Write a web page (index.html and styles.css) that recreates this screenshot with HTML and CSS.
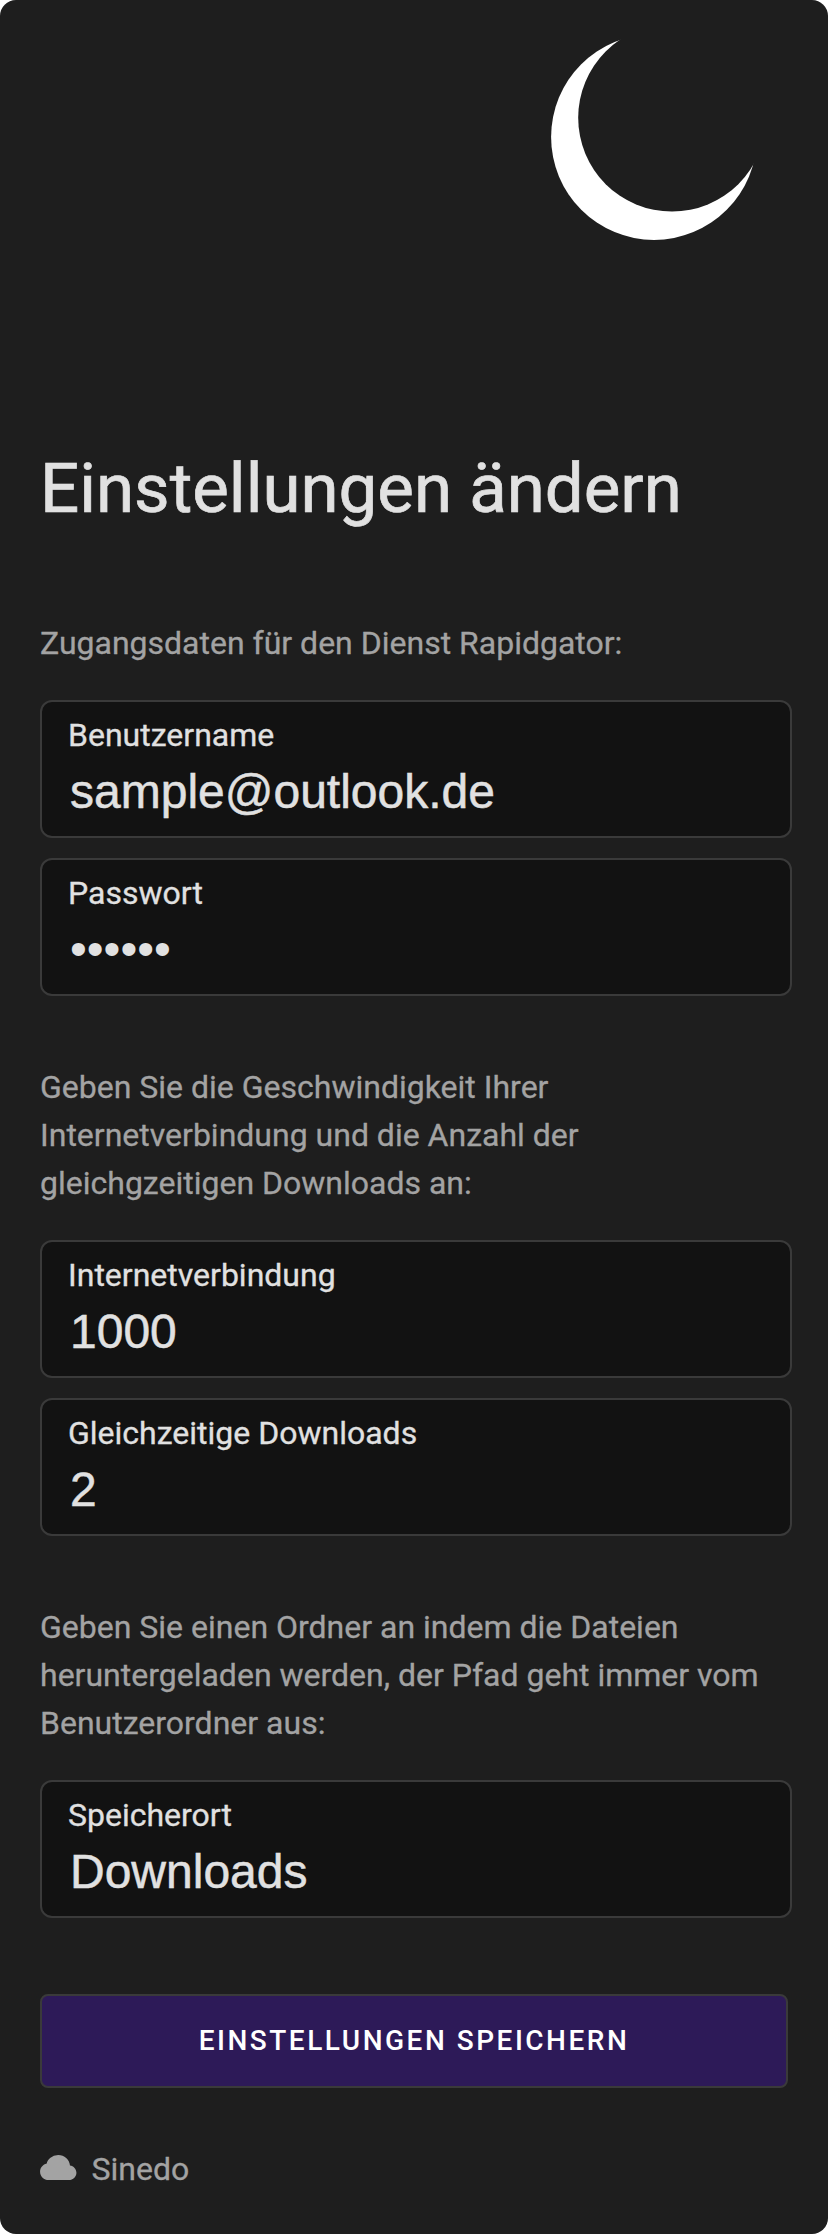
FILE: index.html
```html
<!DOCTYPE html>
<html lang="de">
<head>
<meta charset="utf-8">
<title>Einstellungen ändern</title>
<link rel="stylesheet" href="styles.css">
</head>
<body>
<main class="card">
  <header class="hero">
    <svg class="moon" viewBox="0 0 206 206" aria-hidden="true">
      <mask id="crescent">
        <rect width="206" height="206" fill="#fff"/>
        <circle cx="121" cy="83.8" r="93.8" fill="#000"/>
      </mask>
      <circle cx="103" cy="103" r="102.9" fill="#fff" mask="url(#crescent)"/>
    </svg>
  </header>
  <h1 class="title">Einstellungen ändern</h1>
  <form class="form">
    <section class="group">
      <p class="hint">Zugangsdaten für den Dienst Rapidgator:</p>
      <label class="field"><span class="label">Benutzername</span><input class="value" type="text" value="sample@outlook.de"></label>
      <label class="field"><span class="label">Passwort</span><input class="value" type="password" value="sample"></label>
    </section>
    <section class="group">
      <p class="hint">Geben Sie die Geschwindigkeit Ihrer<br>Internetverbindung und die Anzahl der<br>gleichgzeitigen Downloads an:</p>
      <label class="field"><span class="label">Internetverbindung</span><input class="value" type="text" value="1000"></label>
      <label class="field"><span class="label">Gleichzeitige Downloads</span><input class="value" type="text" value="2"></label>
    </section>
    <section class="group">
      <p class="hint">Geben Sie einen Ordner an indem die Dateien<br>heruntergeladen werden, der Pfad geht immer vom<br>Benutzerordner aus:</p>
      <label class="field"><span class="label">Speicherort</span><input class="value" type="text" value="Downloads"></label>
    </section>
    <button class="submit" type="button">Einstellungen speichern</button>
  </form>
  <footer class="footer">
    <svg class="cloud" viewBox="0 2 16 11" aria-hidden="true"><path d="M4.406 3.342A5.53 5.53 0 0 1 8 2c2.69 0 4.923 2 5.166 4.579C14.758 6.804 16 8.137 16 9.773 16 11.569 14.502 13 12.687 13H3.781C1.708 13 0 11.366 0 9.318c0-1.763 1.266-3.223 2.942-3.593.143-.863.698-1.723 1.464-2.383z"/></svg>
    <span>Sinedo</span>
  </footer>
</main>
</body>
</html>
```

FILE: styles.css
```css
* { box-sizing: border-box; }
body { margin: 0; background: #fff; font-family: Roboto, sans-serif; }
.card {
  width: 828px;
  height: 2234px;
  padding: 34px 36px 0 40px;
  border-radius: 16px;
  background: #1e1e1e;
  color: #a3a3a3;
  font-size: 32px;
  line-height: 48px;
  -webkit-text-stroke: 0.3px currentColor;
  overflow: hidden;
}
.hero { height: 407px; padding-right: 35px; display: flex; justify-content: flex-end; }
.moon { width: 206px; height: 206px; }
.title {
  margin: 0 0 82px;
  color: #e1e1e1;
  font-size: 69px;
  font-weight: 400;
  line-height: 96px;
  white-space: nowrap;
  -webkit-text-stroke: 0.7px currentColor;
}
.form { display: flex; flex-direction: column; }
.group { display: flex; flex-direction: column; gap: 20px; margin-bottom: 67px; }
.group:last-of-type { margin-bottom: 76px; }
.hint { margin: 0 0 13px; white-space: nowrap; }
.field {
  height: 138px;
  padding: 9px 26px 0;
  display: flex;
  flex-direction: column;
  border: 2px solid #3a3a3a;
  border-radius: 12px;
  background: #121212;
  color: #e1e1e1;
}
.label { height: 48px; }
.value {
  width: 100%;
  height: 56px;
  margin: 5px 0 0;
  padding: 0 2px;
  border: 0;
  outline: 0;
  background: transparent;
  color: inherit;
  font: 48px/56px "Liberation Sans", Arial, sans-serif;
  -webkit-text-stroke: 0.5px currentColor;
}
.value[type="password"] { margin-top: 4px; -webkit-text-stroke: 0; }
.submit {
  width: 748px;
  height: 94px;
  padding: 0;
  border: 2px solid #3a3a3a;
  border-radius: 8px;
  background: #2d1a58;
  color: #fff;
  font: 500 28px/40px Roboto, sans-serif;
  letter-spacing: 2.5px;
  text-transform: uppercase;
  -webkit-text-stroke: 0;
}
.footer { display: flex; align-items: center; gap: 15px; margin-top: 57px; }
.cloud { width: 36.5px; height: 25px; margin-bottom: 3px; fill: currentColor; }
```
